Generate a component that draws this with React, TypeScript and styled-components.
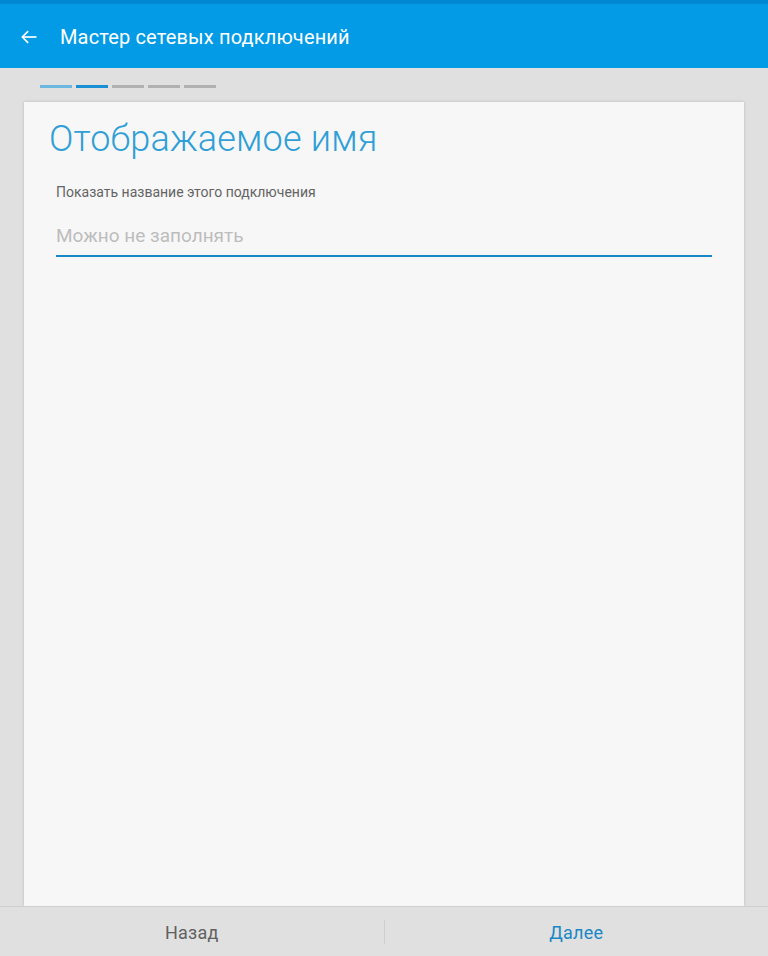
import React from "react";
import styled, { createGlobalStyle } from "styled-components";

const Global = createGlobalStyle`
  html, body {
    margin: 0;
    padding: 0;
    height: 100%;
  }
  body {
    font-family: Roboto, "Noto Sans", sans-serif;
    background: #e0e0e0;
  }
  #root {
    height: 100%;
  }
`;

const Screen = styled.div`
  height: 956px;
  display: flex;
  flex-direction: column;
  background: #e0e0e0;
  overflow: hidden;
`;

const StatusStrip = styled.div`
  height: 4px;
  background: #0288d1;
`;

const AppBar = styled.header`
  height: 64px;
  background: #039be5;
  display: flex;
  align-items: center;
  padding: 2px 0 0 18px;
  box-sizing: border-box;
  color: #fff;
`;

const BackButton = styled.button`
  width: 22px;
  height: 22px;
  padding: 0;
  border: none;
  background: none;
  color: #fff;
  display: flex;
  align-items: center;
  justify-content: center;
  margin-right: 20px;
`;

const Title = styled.h1`
  margin: 0;
  font-size: 20px;
  font-weight: 400;
  letter-spacing: 0.15px;
`;

const Steps = styled.div`
  display: flex;
  align-items: flex-start;
  gap: 4px;
  height: 34px;
  padding: 17px 0 0 40px;
  box-sizing: border-box;
  flex-shrink: 0;
`;

const Step = styled.div<{ $state: "done" | "active" | "todo" }>`
  width: 32px;
  height: 3px;
  background: ${(p) =>
    p.$state === "done" ? "#6cb8e0" : p.$state === "active" ? "#1a8fd4" : "#b1b1b1"};
`;

const Body = styled.main`
  flex: 1;
  display: flex;
  padding: 0 24px;
  min-height: 0;
`;

const Card = styled.section`
  flex: 1;
  background: #f7f7f7;
  box-shadow: 0 0 3px rgba(0, 0, 0, 0.18);
  padding: 16px 32px 0 25px;
  box-sizing: border-box;
`;

const Heading = styled.h2`
  margin: 0;
  font-size: 36px;
  font-weight: 300;
  color: #2f9fd6;
  line-height: 42px;
  letter-spacing: 0.2px;
`;

const Field = styled.div`
  padding: 24px 0 0 7px;
`;

const Label = styled.label`
  display: block;
  font-size: 14px;
  color: #646464;
  line-height: 16px;
`;

const Input = styled.input`
  display: block;
  width: 100%;
  box-sizing: border-box;
  margin-top: 24px;
  padding: 0 0 8px 0;
  border: none;
  border-bottom: 2px solid #1a87c6;
  background: transparent;
  font-family: Roboto, "Noto Sans", sans-serif;
  font-size: 19px;
  line-height: 23px;
  color: #333;
  outline: none;
  &::placeholder {
    color: #bdbdbd;
  }
`;

const Footer = styled.footer`
  height: 49px;
  flex-shrink: 0;
  border-top: 1px solid #cfcfcf;
  display: flex;
  align-items: center;
  background: #e0e0e0;
`;

const FooterButton = styled.button<{ $primary?: boolean }>`
  flex: 1;
  height: 100%;
  border: none;
  background: none;
  font-family: Roboto, "Noto Sans", sans-serif;
  font-size: 18px;
  letter-spacing: 0.2px;
  color: ${(p) => (p.$primary ? "#1a87c6" : "#616161")};
  padding: 2px 0 0;
`;

const Divider = styled.div`
  width: 1px;
  height: 24px;
  background: #cdcdcd;
`;

export default function App() {
  return (
    <Screen>
      <Global />
      <StatusStrip />
      <AppBar>
        <BackButton aria-label="Назад">
          <svg width="20" height="20" viewBox="0 0 24 24" fill="none" stroke="currentColor" strokeWidth="2" strokeLinecap="square">
            <path d="M20 12H5" />
            <path d="M11 5l-7 7 7 7" strokeLinecap="butt" />
          </svg>
        </BackButton>
        <Title>Мастер сетевых подключений</Title>
      </AppBar>
      <Steps>
        <Step $state="done" />
        <Step $state="active" />
        <Step $state="todo" />
        <Step $state="todo" />
        <Step $state="todo" />
      </Steps>
      <Body>
        <Card>
          <Heading>Отображаемое имя</Heading>
          <Field>
            <Label>Показать название этого подключения</Label>
            <Input placeholder="Можно не заполнять" />
          </Field>
        </Card>
      </Body>
      <Footer>
        <FooterButton>Назад</FooterButton>
        <Divider />
        <FooterButton $primary>Далее</FooterButton>
      </Footer>
    </Screen>
  );
}
